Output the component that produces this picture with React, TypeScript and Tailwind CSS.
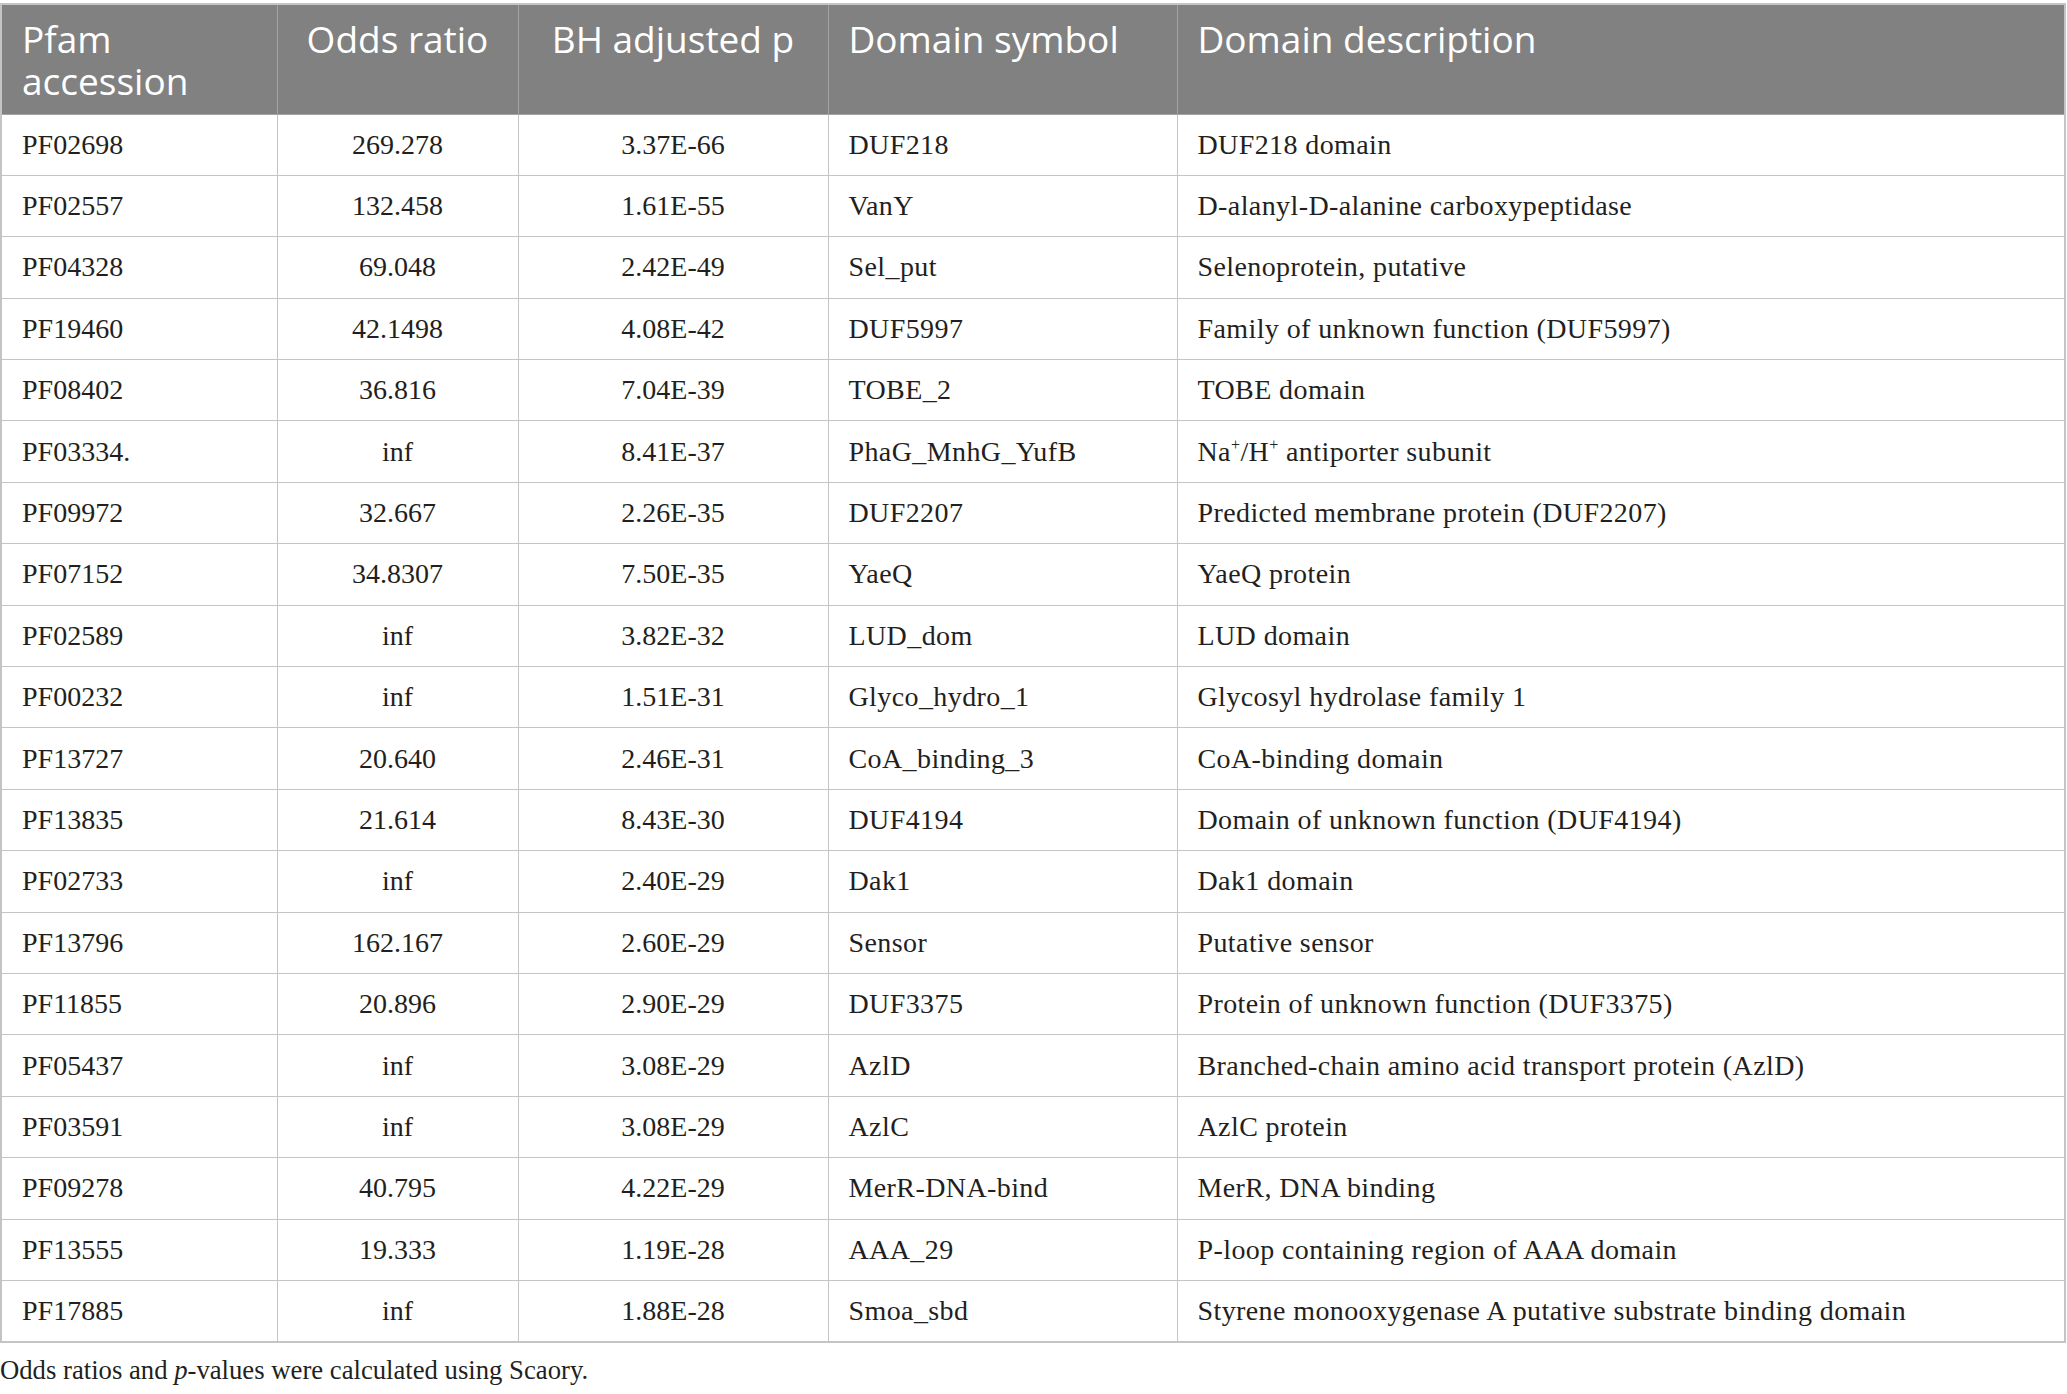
import React from "react";

const rows: [string, string, string, string, React.ReactNode][] = [
  ["PF02698", "269.278", "3.37E-66", "DUF218", "DUF218 domain"],
  ["PF02557", "132.458", "1.61E-55", "VanY", "D-alanyl-D-alanine carboxypeptidase"],
  ["PF04328", "69.048", "2.42E-49", "Sel_put", "Selenoprotein, putative"],
  ["PF19460", "42.1498", "4.08E-42", "DUF5997", "Family of unknown function (DUF5997)"],
  ["PF08402", "36.816", "7.04E-39", "TOBE_2", "TOBE domain"],
  [
    "PF03334.",
    "inf",
    "8.41E-37",
    "PhaG_MnhG_YufB",
    <>
      Na<sup className="text-[16px] -top-[11px]">+</sup>/H<sup className="text-[16px] -top-[11px]">+</sup> antiporter subunit
    </>,
  ],
  ["PF09972", "32.667", "2.26E-35", "DUF2207", "Predicted membrane protein (DUF2207)"],
  ["PF07152", "34.8307", "7.50E-35", "YaeQ", "YaeQ protein"],
  ["PF02589", "inf", "3.82E-32", "LUD_dom", "LUD domain"],
  ["PF00232", "inf", "1.51E-31", "Glyco_hydro_1", "Glycosyl hydrolase family 1"],
  ["PF13727", "20.640", "2.46E-31", "CoA_binding_3", "CoA-binding domain"],
  ["PF13835", "21.614", "8.43E-30", "DUF4194", "Domain of unknown function (DUF4194)"],
  ["PF02733", "inf", "2.40E-29", "Dak1", "Dak1 domain"],
  ["PF13796", "162.167", "2.60E-29", "Sensor", "Putative sensor"],
  ["PF11855", "20.896", "2.90E-29", "DUF3375", "Protein of unknown function (DUF3375)"],
  ["PF05437", "inf", "3.08E-29", "AzlD", "Branched-chain amino acid transport protein (AzlD)"],
  ["PF03591", "inf", "3.08E-29", "AzlC", "AzlC protein"],
  ["PF09278", "40.795", "4.22E-29", "MerR-DNA-bind", "MerR, DNA binding"],
  ["PF13555", "19.333", "1.19E-28", "AAA_29", "P-loop containing region of AAA domain"],
  ["PF17885", "inf", "1.88E-28", "Smoa_sbd", "Styrene monooxygenase A putative substrate binding domain"],
];

export default function App() {
  return (
    <div className="w-[2067px] h-[1394px] bg-white overflow-hidden pt-[3px]">
      <table
        className="w-[2066px] table-fixed border-collapse border-2 border-[#c4c4c4] [font-family:'Liberation_Serif',serif] text-[#231f20]"
      >
        <colgroup>
          <col className="w-[276px]" />
          <col className="w-[241px]" />
          <col className="w-[310px]" />
          <col className="w-[349px]" />
          <col />
        </colgroup>
        <thead>
          <tr className="h-[110px] bg-[#808180] text-white [font-family:'Open_Sans',sans-serif] text-[37px] leading-[42px] align-top">
            <th className="font-normal text-left pl-[20px] pt-[13px] border border-[#a3a3a3]">
              Pfam
              <br />
              accession
            </th>
            <th className="font-normal text-center pt-[13px] border border-[#a3a3a3]">Odds ratio</th>
            <th className="font-normal text-center pt-[13px] border border-[#a3a3a3]">BH adjusted p</th>
            <th className="font-normal text-left pl-[20px] pt-[13px] border border-[#a3a3a3]">Domain symbol</th>
            <th className="font-normal text-left pl-[20px] pt-[13px] border border-[#a3a3a3]">Domain description</th>
          </tr>
        </thead>
        <tbody className="text-[28px]">
          {rows.map((r, i) => (
            <tr key={i} className="h-[61.4px]">
              <td className="pl-[20px] border border-[#c4c4c4]">{r[0]}</td>
              <td className="text-center border border-[#c4c4c4]">{r[1]}</td>
              <td className="text-center border border-[#c4c4c4]">{r[2]}</td>
              <td className="pl-[20px] tracking-[0.4px] border border-[#c4c4c4]">{r[3]}</td>
              <td className="pl-[20px] tracking-[0.4px] border border-[#c4c4c4]">{r[4]}</td>
            </tr>
          ))}
        </tbody>
      </table>
      <p className="mt-[10px] [font-family:'Liberation_Serif',serif] text-[26.7px] text-[#231f20] leading-[34px]">
        Odds ratios and <i>p</i>-values were calculated using Scaory.
      </p>
    </div>
  );
}
